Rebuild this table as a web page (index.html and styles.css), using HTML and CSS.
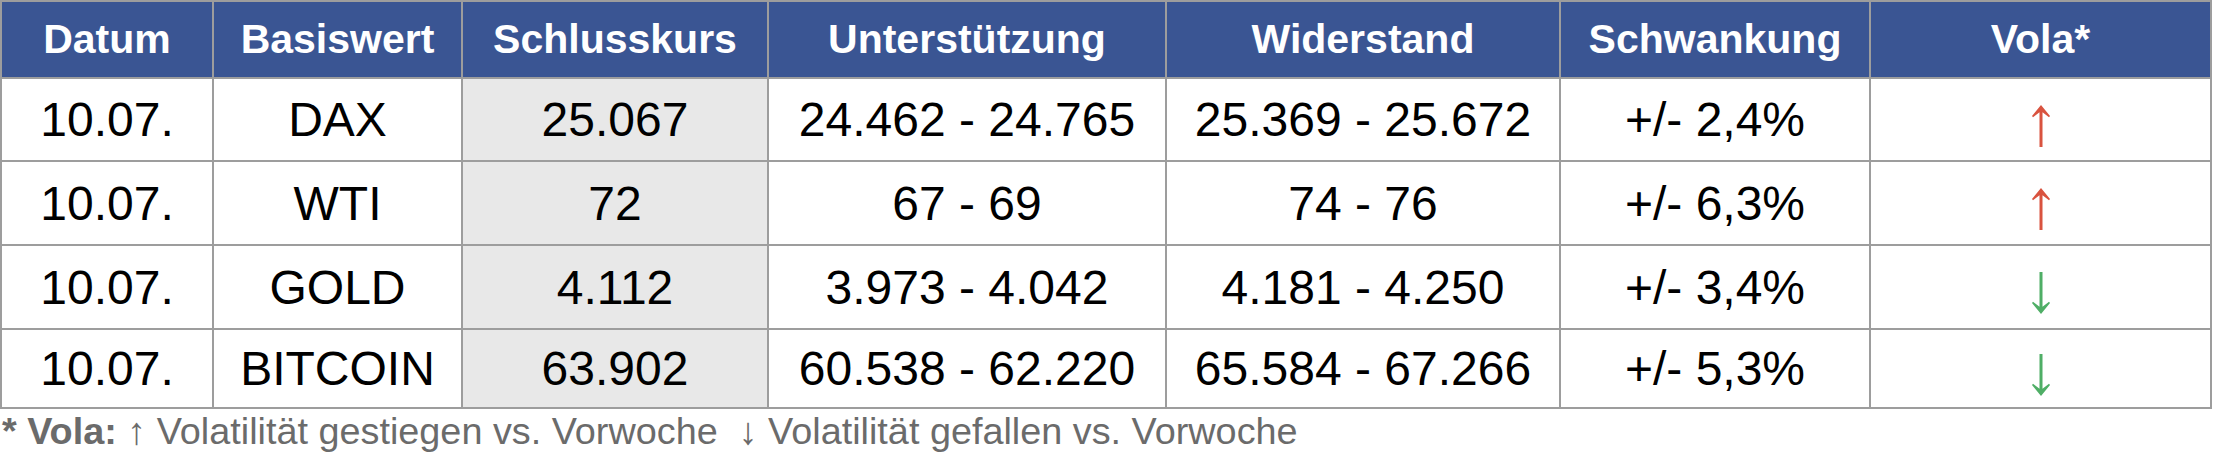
FILE: index.html
```html
<!DOCTYPE html>
<html lang="de">
<head>
<meta charset="utf-8">
<title>Vola</title>
<link rel="stylesheet" href="styles.css">
</head>
<body>
<div class="sheet">
  <div class="grid">
    <div class="h">Datum</div>
    <div class="h">Basiswert</div>
    <div class="h">Schlusskurs</div>
    <div class="h">Unterstützung</div>
    <div class="h">Widerstand</div>
    <div class="h">Schwankung</div>
    <div class="h">Vola*</div>

    <div class="c">10.07.</div>
    <div class="c">DAX</div>
    <div class="c k">25.067</div>
    <div class="c">24.462 - 24.765</div>
    <div class="c">25.369 - 25.672</div>
    <div class="c">+/- 2,4%</div>
    <div class="c"><svg class="arr up" viewBox="0 0 18 42" width="18" height="42"><path d="M9 0 L18 11 L17 12.2 L10.5 7.2 L10.5 42 L7.5 42 L7.5 7.2 L1 12.2 L0 11 Z"/></svg></div>

    <div class="c">10.07.</div>
    <div class="c">WTI</div>
    <div class="c k">72</div>
    <div class="c">67 - 69</div>
    <div class="c">74 - 76</div>
    <div class="c">+/- 6,3%</div>
    <div class="c"><svg class="arr up" viewBox="0 0 18 42" width="18" height="42"><path d="M9 0 L18 11 L17 12.2 L10.5 7.2 L10.5 42 L7.5 42 L7.5 7.2 L1 12.2 L0 11 Z"/></svg></div>

    <div class="c">10.07.</div>
    <div class="c">GOLD</div>
    <div class="c k">4.112</div>
    <div class="c">3.973 - 4.042</div>
    <div class="c">4.181 - 4.250</div>
    <div class="c">+/- 3,4%</div>
    <div class="c"><svg class="arr down" viewBox="0 0 18 42" width="18" height="42"><path d="M9 42 L18 31 L17 29.8 L10.5 34.8 L10.5 0 L7.5 0 L7.5 34.8 L1 29.8 L0 31 Z"/></svg></div>

    <div class="c">10.07.</div>
    <div class="c">BITCOIN</div>
    <div class="c k">63.902</div>
    <div class="c">60.538 - 62.220</div>
    <div class="c">65.584 - 67.266</div>
    <div class="c">+/- 5,3%</div>
    <div class="c"><svg class="arr down" viewBox="0 0 18 42" width="18" height="42"><path d="M9 42 L18 31 L17 29.8 L10.5 34.8 L10.5 0 L7.5 0 L7.5 34.8 L1 29.8 L0 31 Z"/></svg></div>
  </div>
  <p class="note"><b>* Vola:</b> ↑ Volatilität gestiegen vs. Vorwoche &nbsp;↓ Volatilität gefallen vs. Vorwoche</p>
</div>
</body>
</html>
```

FILE: styles.css
```css
body {
  margin: 0;
  background: #ffffff;
  font-family: "Liberation Sans", Arial, sans-serif;
}

.grid {
  display: grid;
  width: 2212px;
  box-sizing: border-box;
  padding: 2px;
  gap: 2px;
  background: #9d9d9d;
  grid-template-columns: 210px 247px 304px 396px 392px 308px 339px;
  grid-template-rows: 75px 81px 82px 82px 77px;
}

.h {
  background: #3a5593;
  color: #ffffff;
  font-weight: bold;
  font-size: 41px;
  display: flex;
  align-items: center;
  justify-content: center;
}

.c {
  background: #ffffff;
  color: #000000;
  font-size: 48px;
  display: flex;
  align-items: center;
  justify-content: center;
}

.k {
  background: #e8e8e8;
}

.arr {
  margin-top: 12px;
}

.up {
  fill: #d9533f;
}

.down {
  fill: #4fae66;
}

.note {
  margin: 1px 0 0 2px;
  font-size: 37.8px;
  line-height: 1.15;
  color: #6b6b6b;
}

.note b {
  font-weight: bold;
}
```
